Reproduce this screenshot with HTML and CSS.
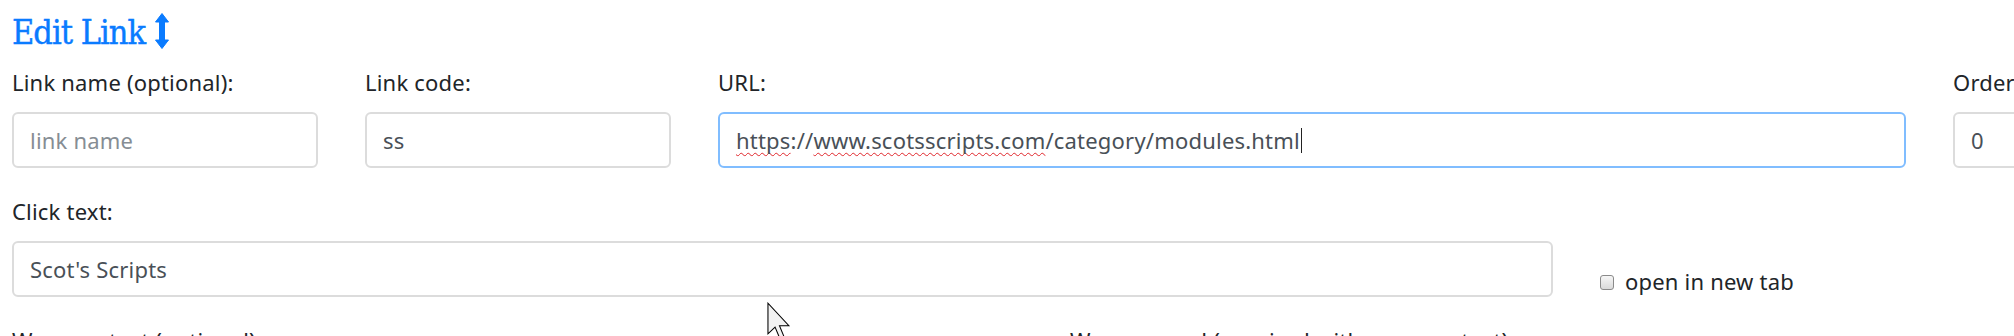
FILE: index.html
```html
<!DOCTYPE html>
<html lang="en">
<head>
    <meta charset="UTF-8">
    <meta name="viewport" content="width=device-width, initial-scale=1.0">
    <title>Edit Link</title>
    <link rel="stylesheet" href="styles.css">
</head>
<body>
    <div class="editor">
        <h2 class="title">Edit Link
            <svg width="14" height="36" viewBox="0 0 14 36" aria-hidden="true">
                <path d="M7 0.5 L13.5 9 H9.5 V27 H13.5 L7 35.5 L0.5 27 H4.5 V9 H0.5 Z" fill="#0a7bff" stroke="#0a7bff" stroke-width="1" stroke-linejoin="round"/>
            </svg>
        </h2>

        <div class="form-row">
            <div class="form-group col-small">
                <label for="link-name">Link name (optional):</label>
                <input id="link-name" class="form-control" type="text" placeholder="link name">
            </div>
            <div class="form-group col-small">
                <label for="link-code">Link code:</label>
                <input id="link-code" class="form-control" type="text" value="ss">
            </div>
            <div class="form-group col-url">
                <label>URL:</label>
                <div class="form-control is-focused" role="textbox"><span class="misspelt">https</span>://<span class="misspelt">www.scotsscripts.com</span>/category/modules.html<span class="caret"></span></div>
            </div>
            <div class="form-group col-small">
                <label for="link-order">Order:</label>
                <input id="link-order" class="form-control" type="text" value="0">
            </div>
        </div>

        <div class="form-row">
            <div class="form-group col-click">
                <label for="click-text">Click text:</label>
                <input id="click-text" class="form-control" type="text" value="Scot's Scripts">
            </div>
            <label class="form-check"><input class="check-input" type="checkbox">open in new tab</label>
        </div>

        <div class="form-row">
            <div class="form-group col-wrap">
                <label>Wrapper text (optional):</label>
            </div>
            <div class="form-group">
                <label>Wrapper end (required with wrapper text):</label>
            </div>
        </div>
    </div>

    <!-- mouse pointer caught in the screenshot -->
    <svg class="cursor" width="24" height="38" viewBox="0 0 12.5 19.5" aria-hidden="true">
        <path d="M0.5 0.5 V16.4 L4.2 12.9 L6.7 18.9 L8.9 18 L6.5 12.2 H11.4 Z" fill="#f2f2f2" stroke="#000" stroke-width="0.55"/>
    </svg>
</body>
</html>
```

FILE: styles.css
```css
html, body {
    margin: 0;
    overflow: hidden;
    background: #fff;
}
body {
    font-family: "Noto Sans", "Open Sans", Arial, sans-serif;
    font-size: 22px;
    line-height: 33px;
    letter-spacing: 0.2px;
    color: #212529;
}
.editor { padding: 0 12px; }

.title {
    display: flex;
    align-items: flex-start;
    gap: 10px;
    margin: 0 0 14px;
    padding-top: 12px;
    font-family: "DejaVu Serif", "Liberation Serif", serif;
    font-stretch: condensed;
    font-weight: normal;
    font-size: 34px;
    line-height: 40px;
    letter-spacing: -1px;
    color: #0a7bff;
    -webkit-text-stroke: 0.4px #0a7bff;
}
.title svg {
    flex-shrink: 0;
    margin-top: 1px;
}

.form-row {
    display: flex;
    gap: 47px;
}
.form-group {
    flex-shrink: 0;
    margin-bottom: 27px;
}
.form-group label {
    display: block;
    margin-bottom: 13px;
    white-space: nowrap;
}
.col-small { width: 306px; }
.col-url { width: 1188px; }
.col-click { width: 1541px; }
.col-wrap { width: 1011px; }

.form-control {
    display: block;
    box-sizing: border-box;
    width: 100%;
    height: 56px;
    padding: 0 16px;
    border: 2px solid #dcdcdc;
    border-radius: 6px;
    background: #fff;
    font: inherit;
    letter-spacing: inherit;
    color: #495057;
    white-space: nowrap;
    outline: none;
}
.form-control::placeholder { color: #868d94; }
.form-control.is-focused {
    display: flex;
    align-items: center;
    border-color: #80bdff;
}
.misspelt {
    text-decoration: underline wavy #e0262b;
    text-decoration-thickness: 1px;
    text-underline-offset: 3px;
    text-decoration-skip-ink: none;
}
.caret {
    display: inline-block;
    width: 1px;
    height: 25px;
    margin-left: 1px;
    background: #222;
}

.form-check {
    flex-shrink: 0;
    align-self: flex-end;
    margin-bottom: 26px;
    white-space: nowrap;
}
.check-input {
    appearance: none;
    width: 14px;
    height: 15px;
    margin: 0 11px 0 0;
    border: 1px solid #8a8a8a;
    border-radius: 3px;
    background: linear-gradient(#f6f6f6, #dadada);
    vertical-align: 0;
}

.cursor {
    position: absolute;
    left: 767px;
    top: 302px;
}
```
